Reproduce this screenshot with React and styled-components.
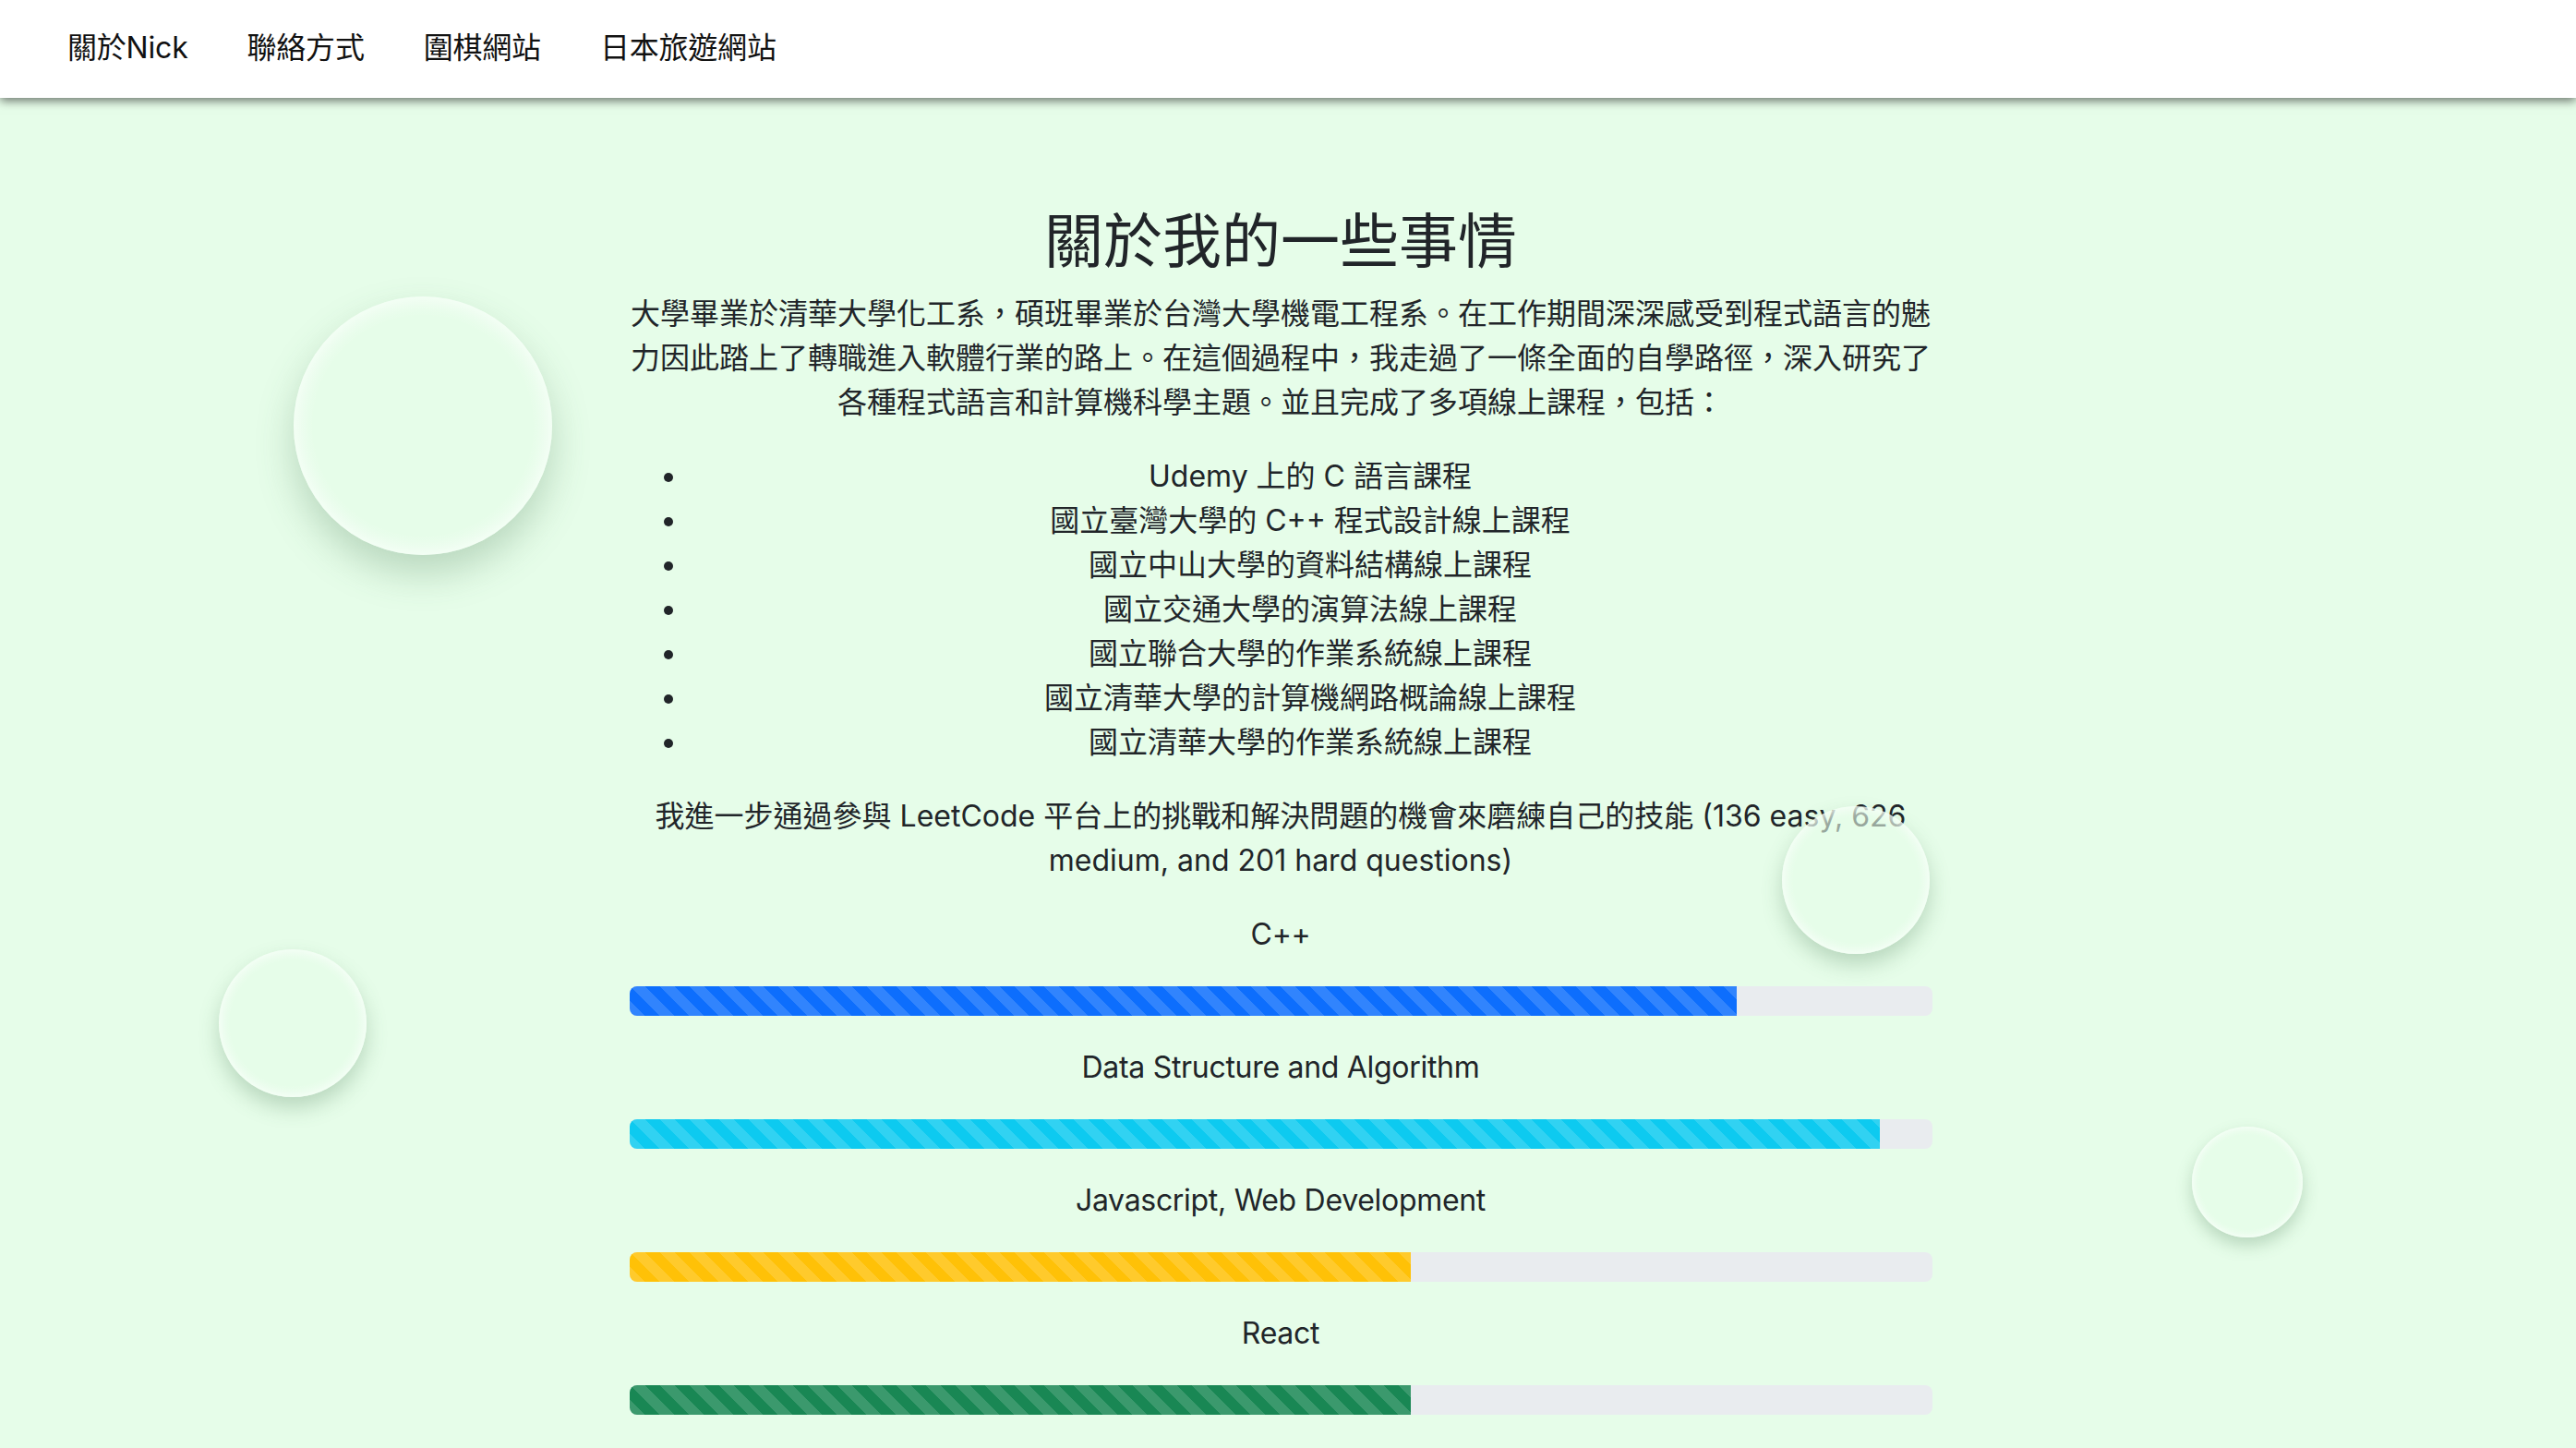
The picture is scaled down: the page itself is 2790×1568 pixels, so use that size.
import React from "react";
import styled, { createGlobalStyle } from "styled-components";

const GlobalStyle = createGlobalStyle`
    * {
        box-sizing: border-box;
    }
    body {
        margin: 0;
        background: #e6fde9;
        color: #212529;
        font-family: "Inter", "Noto Sans CJK TC", "Noto Sans", sans-serif;
        font-size: 32px;
        line-height: 1.5;
        overflow: hidden;
    }
`;

const Page = styled.div`
    position: relative;
    min-height: 1568px;
`;

const Navbar = styled.nav`
    height: 106px;
    background: #ffffff;
    display: flex;
    align-items: center;
    padding: 0 0 2px 41px;
    box-shadow: 0 3px 10px rgba(0, 0, 0, 0.55);
    position: relative;
    z-index: 2;
`;

const NavLink = styled.a`
    padding: 0 32px;
    font-size: 32px;
    color: #111;
    text-decoration: none;
    line-height: 48px;
    letter-spacing: -0.2px;
`;

const Main = styled.main`
    display: flex;
    justify-content: center;
    padding: 117px 16px 0 0;
`;

const Content = styled.section`
    width: 1411px;
    text-align: center;
`;

const Title = styled.h2`
    font-size: 64px;
    font-weight: 400;
    line-height: 1.2;
    margin: 0 0 16px;
`;

const Para = styled.p`
    margin: 0 0 32px;
`;

const CourseList = styled.ul`
    margin: 0 0 32px;
    padding-left: 64px;
`;

const Course = styled.li`
    text-align: center;
`;

const SkillLabel = styled.p`
    margin: 0 0 32px;
    letter-spacing: -0.3px;
`;

const Track = styled.div`
    height: 32px;
    border-radius: 8px;
    background: #e9ecef;
    overflow: hidden;
    display: flex;
    margin-bottom: 32px;
`;

const Fill = styled.div`
    height: 100%;
    background-color: ${(p) => p.$color};
    background-image: linear-gradient(
        45deg,
        rgba(255, 255, 255, 0.15) 25%,
        transparent 25%,
        transparent 50%,
        rgba(255, 255, 255, 0.15) 50%,
        rgba(255, 255, 255, 0.15) 75%,
        transparent 75%,
        transparent
    );
    background-size: 32px 32px;
`;

const Bubble = styled.div`
    position: absolute;
    left: ${(p) => p.$x}px;
    top: ${(p) => p.$y}px;
    width: ${(p) => p.$size}px;
    height: ${(p) => p.$size}px;
    border-radius: 50%;
    background: radial-gradient(
        circle at 50% 50%,
        rgba(230, 253, 233, 0.6) 60%,
        rgba(245, 255, 247, 0.75) 100%
    );
    box-shadow: inset 0 0 ${(p) => p.$size / 12}px rgba(255, 255, 255, 0.9),
        0 ${(p) => p.$size / 14}px ${(p) => p.$size / 7}px rgba(70, 120, 80, 0.28);
    z-index: 3;
    pointer-events: none;
`;

const courses = [
    "Udemy 上的 C 語言課程",
    "國立臺灣大學的 C++ 程式設計線上課程",
    "國立中山大學的資料結構線上課程",
    "國立交通大學的演算法線上課程",
    "國立聯合大學的作業系統線上課程",
    "國立清華大學的計算機網路概論線上課程",
    "國立清華大學的作業系統線上課程",
];

const skills = [
    { name: "C++", value: 85, color: "#0d6efd" },
    { name: "Data Structure and Algorithm", value: 96, color: "#0dcaf0" },
    { name: "Javascript, Web Development", value: 60, color: "#ffc107" },
    { name: "React", value: 60, color: "#198754" },
];

const bubbles = [
    { x: 318, y: 321, size: 280 },
    { x: 1930, y: 873, size: 160 },
    { x: 237, y: 1028, size: 160 },
    { x: 2374, y: 1220, size: 120 },
];

const App = () => {
    return (
        <Page>
            <GlobalStyle />
            <Navbar>
                <NavLink href="#">關於Nick</NavLink>
                <NavLink href="#">聯絡方式</NavLink>
                <NavLink href="#">圍棋網站</NavLink>
                <NavLink href="#">日本旅遊網站</NavLink>
            </Navbar>
            <Main>
                <Content>
                    <Title>關於我的一些事情</Title>
                    <Para>
                        大學畢業於清華大學化工系，碩班畢業於台灣大學機電工程系。在工作期間深深感受到程式語言的魅力因此踏上了轉職進入軟體行業的路上。在這個過程中，我走過了一條全面的自學路徑，深入研究了各種程式語言和計算機科學主題。並且完成了多項線上課程，包括：
                    </Para>
                    <CourseList>
                        {courses.map((c) => (
                            <Course key={c}>{c}</Course>
                        ))}
                    </CourseList>
                    <Para>
                        我進一步通過參與 LeetCode 平台上的挑戰和解決問題的機會來磨練自己的技能 (136 easy, 626 medium, and 201 hard questions)
                    </Para>
                    {skills.map((s) => (
                        <div key={s.name}>
                            <SkillLabel>{s.name}</SkillLabel>
                            <Track>
                                <Fill $color={s.color} style={{ width: `${s.value}%` }} />
                            </Track>
                        </div>
                    ))}
                </Content>
            </Main>
            {bubbles.map((b, i) => (
                <Bubble key={i} $x={b.x} $y={b.y} $size={b.size} />
            ))}
        </Page>
    );
};

export default App;
